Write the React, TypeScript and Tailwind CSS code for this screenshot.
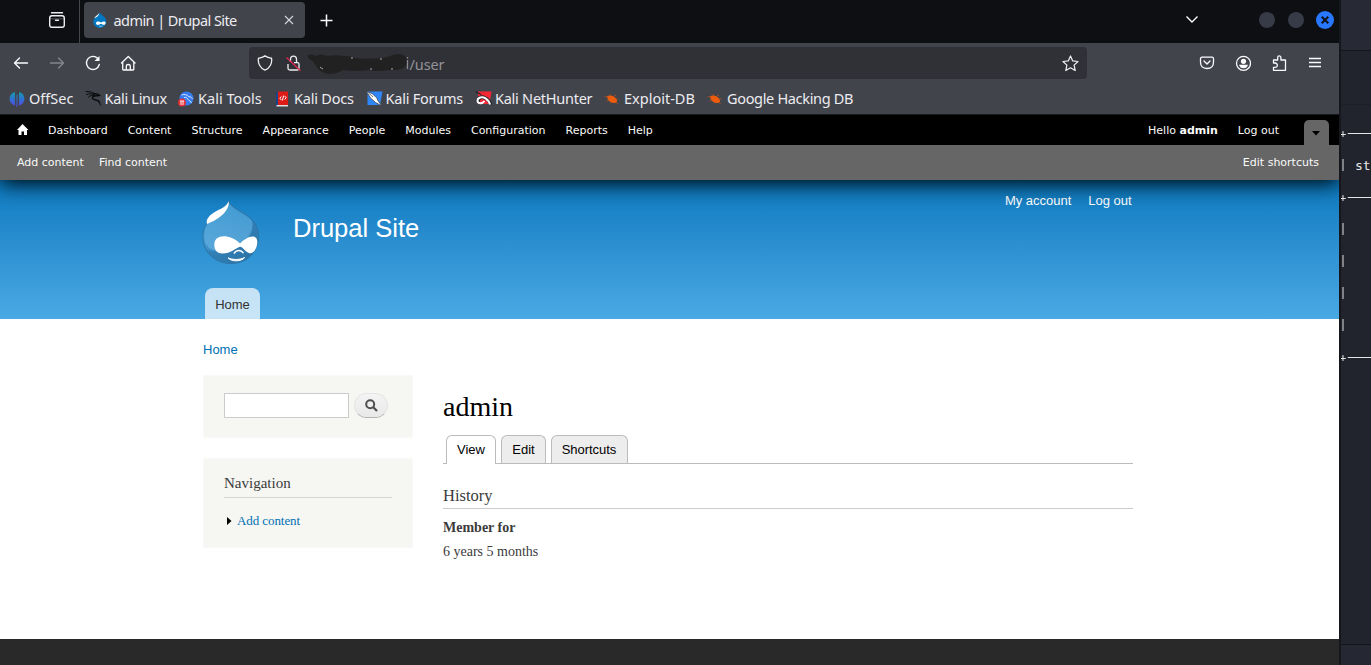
import React from "react";

const chrome = "font-['Noto_Sans',sans-serif] text-[#ececf0]";

function DropletIcon() {
  return (
    <svg width="16" height="16" viewBox="0 0 16 16">
      <path d="M7.7 0.5C8.3 2.6 14.3 4.4 14.3 9.6A6.4 6.2 0 0 1 1.2 9.6C1.2 5.6 5.6 4.4 7.7 0.5Z" fill="#0077c0" />
      <path d="M7.300 1C6.400 3 3 3.900 2.300 6.300C4.500 5.700 6.900 3.800 7.300 1Z" fill="#fff" />
      <path d="M4 11.300C4 8.900 7 8.900 9 10.600C11 8.900 14 8.900 13.600 11.200C13.300 13.300 11 13.300 9 11.800C7 13.400 4 13.500 4 11.300Z" fill="#fff" />
      <path d="M7 14C8.300 14.500 9.300 14.400 10.500 13.900" stroke="#cfe8f7" fill="none" strokeWidth=".7" />
    </svg>
  );
}

function SiteLogo() {
  return (
    <svg width="58" height="66" viewBox="0 0 58 66">
      <defs>
        <linearGradient id="drop" x1="0" y1="0" x2=".7" y2="1">
          <stop offset="0" stopColor="#5cb4e6" />
          <stop offset=".55" stopColor="#3c8fc9" />
          <stop offset="1" stopColor="#2c73a6" />
        </linearGradient>
        <linearGradient id="shine" x1="0" y1="0" x2="0" y2="1">
          <stop offset="0" stopColor="#3f9bd2" />
          <stop offset="1" stopColor="#64afe0" />
        </linearGradient>
      </defs>
      <path d="M26.700 .8C28 11 56.500 13 56.500 36C56.500 53 44 63.500 29 63.500S.8 53 .8 36.700C.8 16 24 15 26.700 .8Z" fill="url(#drop)" stroke="#2d72a2" strokeWidth=".9" />
      <path d="M26.700 3C29 12 47 14 50 22C53 34 42 51.500 20 51.500C7 51.500 2.500 45 2.500 37C2.500 27 8 21 15 17C22 13 26 9 26.700 3Z" fill="url(#shine)" opacity=".8" />
      <path d="M51 20C59 34 53 53 36 60C22 65 9 59 4 50C24 56 52 44 51 20Z" fill="#2b76aa" opacity=".5" />
      <path d="M26.700 1C28 11 17 19 5.200 24C3.500 21 6 16 12 12.500C19 8.500 24.500 7 26.700 1Z" fill="#fff" />
      <path d="M12.300 45C12.300 33.500 28 34 38 43.500C45 36.500 54 33.500 55.300 41C55.800 48 51.500 54 47.500 53.300C43 52 41.500 47.300 38 46.800C33 48.500 29 53.500 20.500 53.500C15.500 53.500 12.300 50 12.300 45Z" fill="#fff" />
      <path d="M32.300 53C34.500 49.600 38.500 49.600 41 52.600" stroke="#fff" strokeWidth="1.500" fill="none" strokeLinecap="round" />
      <path d="M26 57.800C30 60 38.500 60 42.700 57.500C39.500 61.800 29 62 26 57.800Z" stroke="#fff" strokeWidth="1" fill="#fff" strokeLinejoin="round" />
    </svg>
  );
}

function OffSecIcon() {
  return (
    <svg width="16" height="16" viewBox="0 0 16 16">
      <defs><linearGradient id="os" x1="0" y1="0" x2="0" y2="1"><stop stopColor="#169cb0" /><stop offset=".5" stopColor="#2e70d0" /><stop offset="1" stopColor="#5b43e9" /></linearGradient></defs>
      <path d="M6 1V14.500Q.6 13 .6 7.800T6 1ZM7.500 3.500H8.500V16H7.500ZM10 1V14.500Q15.400 13 15.400 7.800T10 1Z" fill="url(#os)" />
    </svg>
  );
}

function KaliIcon() {
  return (
    <svg width="17" height="17" viewBox="0 0 17 17" fill="none" stroke="#090a0c" strokeLinecap="round">
      <path d="M1 1.500C4 1.800 7 1.500 9.500 3.500M1.500 4.500C5 3.300 7 3.500 9 4.500M3.500 7C5 5.500 7.500 5 9 5.300" strokeWidth="1" />
      <path d="M8.500 4C11.500 3.500 13 4 14.500 5.500L12 5.800C9 5.500 7 7 7.500 8.500C8.500 10.500 13 9 14.500 12.500" strokeWidth="1.500" />
      <path d="M13.500 10.500L15.500 15" strokeWidth="1" />
    </svg>
  );
}

function ToolsIcon() {
  return (
    <svg width="16" height="16" viewBox="0 0 16 16">
      <circle cx="8.500" cy="7.500" r="7" fill="#367bf0" />
      <path d="M3.500 4C6 3 9 3.500 10.500 5.500C13 5.500 14 7 14.500 8M6 6.500C8 6 9 6.500 9.500 8C11 10 13 10 13.500 12" stroke="#e6efff" fill="none" strokeWidth=".9" />
      <circle cx="4" cy="11.500" r="3.900" fill="#e53238" />
      <path d="M2 10H6M3 10V14M5 10V14" stroke="#fff" strokeWidth=".9" />
    </svg>
  );
}

function DocsIcon() {
  return (
    <svg width="16" height="16" viewBox="0 0 16 16">
      <path d="M2 1H4V15H2Z" fill="#18448b" /><path d="M4 .5H14V14H4Z" fill="#df1b18" />
      <path d="M2.500 14H14V15.500H2.500Z" fill="#ddd" />
      <path d="M7.300 5.500L5.800 7.200L7.300 9M10.700 5L12.200 6.700L10.700 8.500M9.700 4.500L8.300 9.500" stroke="#fff" fill="none" strokeWidth="1" />
    </svg>
  );
}

function ForumsIcon() {
  return (
    <svg width="17" height="17" viewBox="0 0 17 17">
      <path d="M1.500 1.500H16.500L14 15H1.500Z" fill="#2f86f6" />
      <path d="M.5 1.500L6 3.500L10.500 7.500L12.500 11.500L16 16L9.500 12.500L4.500 8Z" fill="#fff" stroke="#29323e" strokeWidth=".7" />
      <path d="M2.500 3L7 7" stroke="#333" strokeWidth=".7" />
    </svg>
  );
}

function NetHunterIcon() {
  return (
    <svg width="17" height="17" viewBox="0 0 17 17">
      <path d="M3 1.500H16.500L14.500 14H3Z" fill="#f52836" />
      <path d="M.5 1.500L6 4.500" stroke="#20242a" strokeWidth="1.400" />
      <path d="M4 12.500C1 9 6 5.500 10 8C14 10 15 12 15.500 14.500" fill="none" stroke="#20242a" strokeWidth="3.600" />
      <path d="M9.500 11C7 14.500 2.500 13.500 2.500 10.800C2.500 7.500 7 6 10.500 8.300C13 10 14.500 12 15 14.500" fill="none" stroke="#fff" strokeWidth="2" />
    </svg>
  );
}

function BugIcon() {
  return (
    <svg width="16" height="16" viewBox="0 0 16 16">
      <path d="M3 5.500C5 3.500 10 4.500 12 7.500C14 10 13 12 10 12C6 12 3.500 9 3 5.500Z" fill="#ed5b0c" />
      <path d="M.5 5.500L5 6M6 5L7 3M10 5L12 4M11 8L14.500 8M5 9L2.500 10M8 11L6.500 12.500M11 11L14 13" stroke="#c9551a" strokeWidth=".6" />
    </svg>
  );
}

const bookmarks = [
  { label: "OffSec", icon: <OffSecIcon />, box: "w-[75.500px]" },
  { label: "Kali Linux", icon: <KaliIcon />, box: "w-[93.500px] tracking-[-0.3px]" },
  { label: "Kali Tools", icon: <ToolsIcon />, box: "w-[96px] tracking-[0.02px]" },
  { label: "Kali Docs", icon: <DocsIcon />, box: "w-[91.500px] tracking-[-0.2px]" },
  { label: "Kali Forums", icon: <ForumsIcon />, box: "w-[109.500px] tracking-[-0.24px]" },
  { label: "Kali NetHunter", icon: <NetHunterIcon />, box: "w-[129px] tracking-[-0.25px]" },
  { label: "Exploit-DB", icon: <BugIcon />, box: "w-[103px]" },
  { label: "Google Hacking DB", icon: <BugIcon />, box: "w-[150px] tracking-[-0.33px]" },
];

function TitleBar() {
  return (
    <div className={`flex h-[43px] bg-[#0e0f13] ${chrome}`}>
      <div className="flex w-[80px] shrink-0 items-center border-r border-[#45464d] pl-[48px] pb-[3px]">
        <svg width="18" height="18" viewBox="0 0 18 18" fill="none" stroke="#eeeef2" strokeWidth="1.400" strokeLinecap="round">
          <path d="M3.500 1.700H14.500" /><rect x="1.700" y="4.700" width="14.600" height="11.500" rx="2.200" /><path d="M7.500 9.300H10.500" />
          <path d="M2 7.700H16" opacity=".2" />
        </svg>
      </div>
      <div className="mt-[2px] ml-[4px] flex h-[36px] w-[221px] items-center rounded-[4px] bg-[#42444c] pl-[8px]">
        <DropletIcon />
        <span className="ml-[5.500px] w-[165px] pb-px text-[14.500px] leading-[20px] tracking-[-0.57px]">admin | Drupal Site</span>
        <svg className="ml-[5.500px]" width="10" height="10" viewBox="0 0 10 10" stroke="#d5d6da" strokeWidth="1.100"><path d="M1 1L9 9M9 1L1 9" /></svg>
      </div>
      <svg className="mt-[14px] ml-[15px]" width="13" height="13" viewBox="0 0 13 13" stroke="#fbfbfe" strokeWidth="1.500"><path d="M.5 6.500H12.500M6.500 .5V12.500" /></svg>
      <div className="flex-1" />
      <svg className="mt-[15px]" width="14" height="9" viewBox="0 0 14 9" fill="none" stroke="#fbfbfe" strokeWidth="1.400"><path d="M1.500 1.500L7 7L12.500 1.500" /></svg>
      <div className="mt-[11px] mr-[5px] ml-[60px] flex h-[18px] items-center">
        <span className="size-[16px] rounded-full bg-[#373b47]" />
        <span className="ml-[13px] size-[16px] rounded-full bg-[#373b47]" />
        <span className="ml-[12px] flex size-[18px] items-center justify-center rounded-full bg-[#2777ff]">
          <svg width="8" height="8" viewBox="0 0 8 8" stroke="#101217" strokeWidth="2"><path d="M.7.700L7.300 7.300M7.300.700L.7 7.300" /></svg>
        </span>
      </div>
    </div>
  );
}

function NavBar() {
  return (
    <div className={`flex h-[41px] items-center bg-[#42444c] pb-px ${chrome}`}>
      <svg className="ml-[13px]" width="16" height="16" viewBox="0 0 16 16" fill="none" stroke="#fbfbfe" strokeWidth="1.400" strokeLinecap="round" strokeLinejoin="round"><path d="M14.500 8H1.500M6.500 3L1.500 8L6.500 13" /></svg>
      <svg className="ml-[20px]" width="16" height="16" viewBox="0 0 16 16" fill="none" stroke="#85868c" strokeWidth="1.400" strokeLinecap="round" strokeLinejoin="round"><path d="M1.500 8H14.500M9.500 3L14.500 8L9.500 13" /></svg>
      <svg className="ml-[20px]" width="16" height="16" viewBox="0 0 16 16" fill="none" stroke="#fbfbfe" strokeWidth="1.400" strokeLinecap="round"><path d="M14.300 9.500A6.500 6.500 0 1 1 12.600 3.300" /><path d="M14.500 1V6H9.500Z" fill="#fbfbfe" stroke="none" /></svg>
      <svg className="ml-[19px]" width="16" height="16" viewBox="0 0 16 16" fill="none" stroke="#fbfbfe" strokeWidth="1.300" strokeLinejoin="round" strokeLinecap="round"><path d="M1.500 8L8.300 1.500L15 8M2.700 7.200V14.300Q2.700 15 3.500 15H13Q13.800 15 13.800 14.300V7.200M6.300 15V11Q6.300 9.500 8.300 9.500T10.300 11V15" /></svg>
      <div className="ml-[113px] flex h-[32px] w-[838px] items-center rounded-[4px] bg-[#303136]">
        <svg className="ml-[8px] shrink-0" width="16" height="16" viewBox="0 0 16 16" fill="none" stroke="#eeeef2" strokeWidth="1.300" strokeLinejoin="round"><path d="M8 .8C10 2.500 12.500 2.800 14.500 3.200C15.500 8.500 12.500 13.500 8 15.200C3.500 13.500.5 8.500 1.500 3.200C3.500 2.800 6 2.500 8 .8Z" /></svg>
        <svg className="ml-[12px] shrink-0" width="17" height="17" viewBox="0 0 17 17" fill="none" stroke="#eeeef2" strokeWidth="1.300"><path d="M5.500 7V4.500A3 3.300 0 0 1 11.500 4.500V7.500M9 7.700H12.500Q14 7.700 14 9.200V13.500Q14 15 12.500 15H5Q3 15 3 13.500V9" /><path d="M1.500 2.500L15.500 15.800" stroke="#e22850" strokeWidth="1.200" /></svg>
        <svg className="ml-[5px] shrink-0" width="103" height="24" viewBox="0 0 103 24">
          <path d="M.5 4.500Q3 2.500 9 5Q14 2 20 5Q30 3.500 36 5Q43 4.500 48 7Q58 8 66 7.500Q76 8 83 5Q92 1 98 5C102 10 100 16 94 18Q86 20 80 19Q72 21 62 19Q48 21 36 19Q30 23 21 23Q12 21 9 15Q7 10 2 8Z" fill="#212121" />
          <path d="M13 16Q14 17 16 18M44 7H46M63 18H65M84 18H86M74 7V9" stroke="#aaa" strokeWidth="1" fill="none" />
          <path d="M100.500 6V7.500M100.500 9V18" stroke="#888a90" strokeWidth="1.300" />
        </svg>
        <span className="ml-[-0.500px] flex-1 pt-[2px] text-[14.500px] leading-[20px] tracking-[-0.1px] text-[#929299]">/user</span>
        <svg className="mr-[8px]" width="17" height="17" viewBox="0 0 17 17" fill="none" stroke="#eeeef2" strokeWidth="1.250" strokeLinejoin="round"><path d="M8.500 1L10.700 5.900L16 6.500L12.100 10.100L13.200 15.500L8.500 12.800L3.800 15.500L4.900 10.100L1 6.500L6.300 5.900Z" /></svg>
      </div>
      <div className="flex-1" />
      <div className="mr-[16px] flex items-center gap-[20px]">
        <svg width="16" height="16" viewBox="0 0 16 16" fill="none" stroke="#fbfbfe" strokeWidth="1.300" strokeLinejoin="round" strokeLinecap="round"><path d="M3 2.200H13Q14.500 2.200 14.500 3.800V7Q14.500 13.500 8 13.500T1.500 7V3.800Q1.500 2.200 3 2.200ZM5 6L8 9L11 6" /></svg>
        <svg width="16" height="16" viewBox="0 0 16 16"><circle cx="8.500" cy="8.300" r="7" fill="none" stroke="#fbfbfe" strokeWidth="1.300" /><circle cx="8.500" cy="6.300" r="2.600" fill="#fbfbfe" /><path d="M4 9.800H13Q12 13.300 8.500 13.300T4 9.800Z" fill="#fbfbfe" /></svg>
        <svg width="16" height="16" viewBox="0 0 16 16" fill="none" stroke="#fbfbfe" strokeWidth="1.300" strokeLinejoin="round"><path d="M2.500 8V5H6.700V2.500A1.600 1.600 0 0 1 9.900 2.500V5H14.500V15.300H2.500V12.300H4.200A2 2 0 0 0 4.200 8Z" /></svg>
        <svg width="16" height="16" viewBox="0 0 16 16" stroke="#fbfbfe" strokeWidth="1.300"><path d="M2 3.500H14M2 7.500H14M2 11.500H14" /></svg>
      </div>
    </div>
  );
}

function AdminBars() {
  return (
    <div className="relative z-10 font-['DejaVu_Sans',sans-serif] text-[11px] shadow-[0_3px_20px_#000] [clip-path:inset(0_0_-30px_0)]">
      <div className="flex h-[31px] items-center gap-[20px] border-t border-[#17191d] bg-black pt-[2px] pl-[17px] text-[#fafafa]">
        <svg className="mr-[-1px] mb-[2px]" width="12" height="12" viewBox="0 0 12 12" fill="#fff"><path d="M5.500 0L11.500 6H10V11H7V7.500H4.500V11H1.500V6H0Z" /></svg>
        {["Dashboard", "Content", "Structure", "Appearance", "People", "Modules", "Configuration", "Reports", "Help"].map((t) => <a key={t}>{t}</a>)}
        <span className="ml-auto">Hello <b>admin</b></span>
        <a>Log out</a>
        <span className="mr-[10px] ml-[5px] flex h-[25px] w-[25px] items-center justify-center self-end rounded-t-[5px] bg-[#666]">
          <svg className="mr-px mt-px" width="8" height="5" viewBox="0 0 8 5"><path d="M0 0H8L4 4.500Z" /></svg>
        </span>
      </div>
      <div className="flex h-[35px] items-center gap-[15px] bg-[#666] pt-[2px] pr-[20px] pl-[17px] text-[#fafafa]">
        <a>Add content</a><a>Find content</a><a className="ml-auto">Edit shortcuts</a>
      </div>
    </div>
  );
}

function SiteHeader() {
  return (
    <header className="flex h-[139px] flex-col bg-linear-to-b from-[#0779bf] to-[#48a9e4] pr-[207px] pl-[202px] font-['Liberation_Sans',sans-serif] text-white">
      <div className="flex h-[108px]">
        <div className="mt-[20px] w-[91px]"><SiteLogo /></div>
        <div className="mt-[32px] text-[25.600px] leading-[32px] tracking-[-0.04px]">Drupal Site</div>
        <div className="mt-[12px] mr-[0.500px] ml-auto flex gap-[17px] text-[13px] leading-[18px] tracking-[-0.02px]"><a>My account</a><a>Log out</a></div>
      </div>
      <div className="ml-[3px] flex h-[31px] w-[55px] items-center justify-center rounded-t-[8px] bg-white/70 pt-[2px] text-[13px] text-[#333]">Home</div>
    </header>
  );
}

function Sidebar() {
  return (
    <aside className="flex w-[210px] flex-col gap-[20px] font-['Liberation_Serif',serif]">
      <div className="flex h-[63px] gap-[5px] border border-[#f9f9f9] bg-[#f6f6f2] pt-[17px] pl-[20px]">
        <input className="h-[25px] w-[125px] border border-[#ccc] bg-white" />
        <button className="flex h-[25px] w-[34px] items-center justify-center rounded-full border border-[#e4e4e4] border-b-[#b4b4b4] bg-linear-to-b from-[#f4f4f4] to-[#e8e8e8]">
          <svg width="13" height="13" viewBox="0 0 13 13" fill="none" stroke="#505050" strokeWidth="2"><circle cx="5.200" cy="5.200" r="4" /><path d="M8 8L12 12" strokeWidth="2.300" /></svg>
        </button>
      </div>
      <div className="h-[90px] border border-[#f9f9f9] bg-[#f6f6f2] px-[20px] pt-[15px]">
        <h2 className="h-[24px] border-b border-[#d6d6d6] text-[15px] leading-[19px] text-[#3b3b3b]">Navigation</h2>
        <div className="mt-[14px] flex items-center text-[13px] leading-[18px] tracking-[-0.08px] text-[#0071b3]">
          <svg className="mr-[5px] ml-[3px]" width="5" height="8" viewBox="0 0 5 8"><path d="M0 0L4.500 4L0 8Z" fill="#000" /></svg>
          Add content
        </div>
      </div>
    </aside>
  );
}

function Tab({ label, active, box }: { label: string; active?: boolean; box: string }) {
  return (
    <a className={`flex items-center justify-center rounded-t-[6px] border border-[#bbb] text-[13px] tracking-[-0.03px] ${box} ${active ? "-mb-px h-[29px] border-b-0 bg-white pb-px" : "h-[28px] border-b-0 bg-[#ededed]"}`}>{label}</a>
  );
}

function Content() {
  return (
    <main className="w-[690px] font-['Liberation_Serif',serif] text-[#3b3b3b]">
      <h1 className="mt-[15px] text-[28px] leading-[34px] text-black">admin</h1>
      <div className="mt-[10px] flex h-[30px] items-end gap-[5px] border-b border-[#bbb] pl-[3px] font-['Liberation_Sans',sans-serif] text-black">
        <Tab label="View" active box="w-[50px]" /><Tab label="Edit" box="w-[45px]" /><Tab label="Shortcuts" box="w-[77px] pr-px" />
      </div>
      <h3 className="mt-[22px] h-[23px] border-b border-[#ccc] text-[16.500px] leading-[20px]">History</h3>
      <div className="mt-[9px] text-[14px] leading-[20px] font-bold">Member for</div>
      <div className="mt-[4px] text-[14px] leading-[20px]">6 years 5 months</div>
    </main>
  );
}

function Rule() {
  return <div className="flex h-[9px] items-center"><svg width="31" height="9" viewBox="0 0 31 9"><path d="M2 1V7" stroke="#8d8f93" strokeWidth="2" /><path d="M0 4.500H5M7 3.500H31" stroke="#e4e5e7" strokeWidth="1.200" /></svg></div>;
}

function Pipe() {
  return <span className="block h-[12px] w-[2px] bg-[#808287]" />;
}

function Terminal() {
  return (
    <aside className="flex w-[32px] flex-col overflow-hidden border-l-2 border-[#15171c] bg-[#22242d]">
      <div className="h-[51px] shrink-0 border-b border-[#14161b] bg-[#272935]" />
      <div className="h-[54px] shrink-0 border-b border-[#1d1f26]" />
      <div className="mt-[25px]"><Rule /></div>
      <div className="mt-[20px] flex h-[12px] items-center pl-px"><Pipe /><span className="ml-[11px] pt-[2px] font-['DejaVu_Sans_Mono',monospace] text-[13px] text-[#e7e8ea]">st</span></div>
      <div className="mt-[23px]"><Rule /></div>
      <div className="mt-[20px] flex flex-col gap-[20px] pl-px"><Pipe /><Pipe /><Pipe /><Pipe /></div>
      <div className="mt-[23px]"><Rule /></div>
      <div className="flex-1" />
      <div className="h-[21px] border-t border-[#14161b] bg-[#252733]" />
    </aside>
  );
}

export default function App() {
  return (
    <div className="flex h-[665px] w-[1371px] overflow-hidden bg-[#22242d]">
      <div className="flex w-[1339px] shrink-0 flex-col bg-white">
        <TitleBar />
        <NavBar />
        <div className={`flex h-[30px] items-center bg-[#42444c] pb-px pl-[9px] text-[14.500px] leading-[20px] ${chrome}`}>
          {bookmarks.map((b) => (
            <a key={b.label} className={`flex shrink-0 items-center whitespace-nowrap ${b.box}`}>
              <span className="flex w-[20px] shrink-0">{b.icon}</span>
              <span className="pb-[2px]">{b.label}</span>
            </a>
          ))}
        </div>
        <AdminBars />
        <SiteHeader />
        <div className="h-[320px] pr-[206px] pl-[203px]">
          <div className="h-[56px] pt-[22px] font-['Liberation_Sans',sans-serif] text-[13px] leading-[18px] text-[#0071b3]">Home</div>
          <div className="flex gap-[30px]"><Sidebar /><Content /></div>
        </div>
        <footer className="flex-1 bg-[#292929]" />
      </div>
      <Terminal />
    </div>
  );
}
